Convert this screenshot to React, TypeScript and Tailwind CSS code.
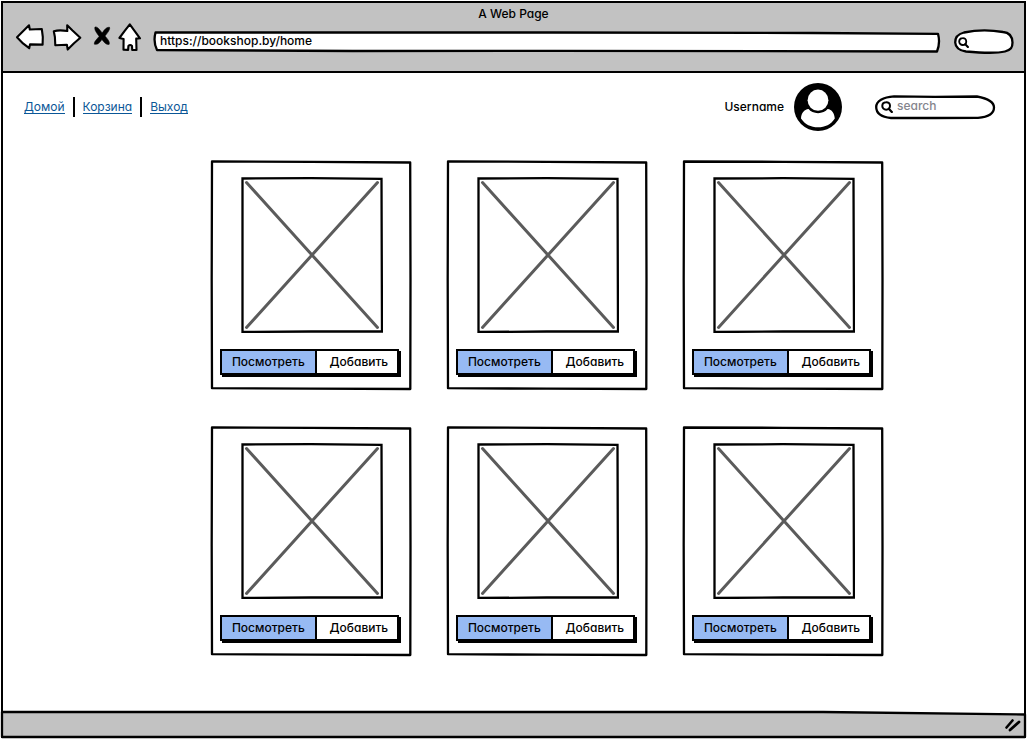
import type { ReactNode } from "react";

type OutlineProps = { box: string; d: string; fill?: string };

/* Hand-drawn outline that stretches behind the content of its parent. */
function Outline({ box, d, fill = "#ffffff" }: OutlineProps) {
  return (
    <svg
      className="pointer-events-none absolute inset-0 h-full w-full overflow-visible"
      viewBox={box}
      preserveAspectRatio="none"
      aria-hidden="true"
    >
      <path
        d={d}
        fill={fill}
        stroke="#000000"
        strokeWidth="2.3"
        strokeLinejoin="round"
        vectorEffect="non-scaling-stroke"
      />
    </svg>
  );
}

function ToolButton({ label, children }: { label: string; children: ReactNode }) {
  return (
    <button type="button" aria-label={label} className="block shrink-0">
      {children}
    </button>
  );
}

function Magnifier({ className }: { className: string }) {
  return (
    <svg className={className} viewBox="0 0 12 12" fill="none" stroke="#000000" aria-hidden="true">
      <path d="M5 1.2C7.3 1 9 2.6 9 4.8C9 7 7.4 8.7 5.2 8.7C3 8.7 1.3 7 1.3 5C1.3 2.9 2.8 1.3 5 1.2Z" strokeWidth="2" />
      <path d="M7.8 7.8L10.8 11" strokeWidth="2.3" strokeLinecap="round" />
    </svg>
  );
}

function BrowserBar() {
  return (
    <header className="border-b-2 border-black bg-[#c2c2c2] pt-[3px] pb-[17px]">
      <h1 className="text-center text-[12px] leading-4 font-medium">A Web Page</h1>
      <div className="flex items-center pr-[10px] pl-3">
        <ToolButton label="Back">
          <svg className="h-8 w-8" viewBox="0 0 32 32" aria-hidden="true">
            <path d="M2 15.2L14 3.3L14.8 7.5L26.8 7L27.8 15L27.6 22.6L15 22.4L14.2 26.2L8 21.4Z" fill="#fff" stroke="#000" strokeWidth="2.1" strokeLinejoin="round" />
          </svg>
        </ToolButton>
        <ToolButton label="Forward">
          <svg className="ml-1 h-8 w-8" viewBox="0 0 32 32" aria-hidden="true">
            <path d="M2.8 9.2C6 8.3 10.5 8 16.3 9L16.2 3.3L21.5 8.5L29.3 15.8L23 21.3L16.7 27.6L15.9 22.7L4.3 23.2L3.9 15Z" fill="#fff" stroke="#000" strokeWidth="2.1" strokeLinejoin="round" />
          </svg>
        </ToolButton>
        <ToolButton label="Stop">
          <svg className="ml-2 h-8 w-6" viewBox="0 0 24 32" aria-hidden="true">
            <path d="M4 5C6.5 4.500 8.500 7.500 11.200 11C13 8.500 15 5 18.500 5.300C19.300 7 17 10.500 13.900 14C16.500 17 19 19.500 18.200 22.300C15.500 23.200 13.200 20.500 10.900 17.500C9 20.200 7 23 3.400 22.200C3 19.500 5.800 17.500 8.200 14.300C6 11.500 3 7.700 4 5Z" fill="#000" stroke="#000" strokeWidth="0.6" />
          </svg>
        </ToolButton>
        <ToolButton label="Home">
          <svg className="h-8 w-7" viewBox="0 0 28 32" aria-hidden="true">
            <path d="M14.8 2.3L25 16.3L21.200 16.6L21.500 28L17.200 27.900L17 24Q15.200 22 13.400 24L13.100 27.900L8.500 27.700L8.600 17L4.400 16L9.700 8.900Z" fill="#fff" stroke="#000" strokeWidth="2.1" strokeLinejoin="round" />
          </svg>
        </ToolButton>
        <div className="relative ml-[10px] mt-2 h-[22px] min-w-0 flex-1">
          <Outline box="0 0 787 22" d="M2.5 1.5L400 1.5L660 2L785 2.8Q787.5 12 784 20.5L400 19.8L200 20L4 19Q0 11 2.5 1.5Z" />
          <input
            type="text"
            aria-label="Address"
            defaultValue="https://bookshop.by/home"
            className="relative block h-5 w-full bg-transparent px-[7px] text-[12px] leading-5 font-medium outline-none"
          />
        </div>
        <div className="relative mt-2 ml-[14px] flex h-6 w-[60px] items-center">
          <Outline box="0 0 60 24" d="M10 2.5Q29 -1.5 49 2C56 2.500 58.300 7.500 58.500 12.500C58.500 17.500 57 20 51 21.500Q40 24 12 21.500C5 20.500 1.500 17.500 1.200 12.500C1 6.500 4 4 10 2.500Z" />
          <Magnifier className="relative ml-1 h-[11px] w-[11px] shrink-0" />
          <input type="text" aria-label="Browser search" className="relative h-4 w-full min-w-0 bg-transparent pr-2 text-[12px] outline-none" />
        </div>
      </div>
    </header>
  );
}

const links = ["Домой", "Корзина", "Выход"];

function SiteBar() {
  return (
    <div className="flex items-center justify-between pt-[10px] pr-[29px] pl-[13px]">
      <nav className="flex items-center divide-x-2 divide-black">
        {links.map((text) => (
          <span key={text} className="flex h-5 items-center px-2">
            <a href="#" className="border-b border-[#0b5797] text-[12px] leading-[13px] text-[#0b5797]">
              {text}
            </a>
          </span>
        ))}
      </nav>
      <div className="flex items-center">
        <span className="text-[12px] leading-4 font-medium">Username</span>
        <svg className="ml-[10px] h-12 w-12" viewBox="0 0 48 48" role="img" aria-label="User avatar">
          <circle cx="24" cy="24" r="24" fill="#000" />
          <path d="M7 35.5C7.3 30 10 26.5 14.6 26C18 31.500 30 31.500 33.600 26C38 26.500 40.300 30 40.800 35.500C37 41.500 31 44.300 24 44.300C17 44.300 11 41.500 7 35.500Z" fill="#fff" />
          <ellipse cx="24" cy="17.2" rx="10.4" ry="10.6" fill="#fff" />
        </svg>
        <div className="relative ml-[33px] flex h-6 w-[120px] items-center">
          <Outline box="0 0 120 24" d="M19 1.3L60 1.8L102 1.5C113 3.5 119 7 119 12.5C119 18.5 113 22 103 22.8L60 23L16 23C6 22 1.2 18 1.2 12C1.2 6 8 2 19 1.3Z" />
          <Magnifier className="relative ml-[6px] h-3 w-3 shrink-0" />
          <input
            type="search"
            aria-label="Search books"
            placeholder="search"
            className="relative mb-0.5 h-5 w-full min-w-0 bg-transparent pr-3 pl-1 text-[12px] leading-5 font-medium outline-none placeholder:text-[#85858d]"
          />
        </div>
      </div>
    </div>
  );
}

function BookCard() {
  return (
    <article className="relative flex h-[230px] w-[201px] flex-col items-center pt-[17px]">
      <Outline box="0 0 201 230" d="M1 1.5L100 1.8L199.2 2.5L199.5 120L199.3 229L100 228.7L1 228.2L0.7 120Z" />
      <svg className="relative h-[156px] w-[142px]" viewBox="0 0 142 156" role="img" aria-label="Book cover">
        <path d="M1.5 1.5L70 1.2L140.500 1.800L141 154.500L70 154.500L1.500 155Z" fill="#fff" stroke="#000" strokeWidth="2.3" />
        <path d="M5.5 5.5L136.500 150.500M136.500 5.500L5.500 150.500" stroke="#5b5b5b" strokeWidth="3" strokeLinecap="round" />
      </svg>
      <div className="relative mt-4 ml-[9px] flex h-[26px] w-[179px] self-start border-2 border-black bg-white text-[12px] leading-4 font-medium shadow-[2px_2px_0_0_#000]">
        <button type="button" className="flex-[96] border-r-2 border-black bg-[#97baf3]">
          Посмотреть
        </button>
        <button type="button" className="flex-[79] pl-1">
          Добавить
        </button>
      </div>
    </article>
  );
}

export default function App() {
  return (
    <div className="min-h-screen bg-white px-px pt-px pb-0.5 font-['Inter','Open_Sans',sans-serif] text-black [font-feature-settings:'cv11']">
      <div className="flex min-h-[calc(100vh-3px)] flex-col border-2 border-black">
        <BrowserBar />
        <main className="flex-1 pb-[56px]">
          <SiteBar />
          <section aria-label="Books" className="mt-[29px] flex justify-center pl-[68px]">
            <div className="grid grid-cols-3 gap-x-[35px] gap-y-9">
              {[1, 2, 3, 4, 5, 6].map((n) => (
                <BookCard key={n} />
              ))}
            </div>
          </section>
        </main>
        <footer className="relative flex h-6 items-center justify-end pr-[3px]">
          <Outline box="0 0 1021 24" d="M-1 0L820 0L1022 2.5L1022 25L-1 25Z" fill="#c2c2c2" />
          <svg className="relative mt-1 h-4 w-4" viewBox="0 0 16 16" fill="none" stroke="#000" strokeLinecap="round" aria-hidden="true">
            <path d="M1.5 9.5L7.5 2.5" strokeWidth="2.6" />
            <path d="M5 12L14 4" strokeWidth="2.8" />
          </svg>
        </footer>
      </div>
    </div>
  );
}
